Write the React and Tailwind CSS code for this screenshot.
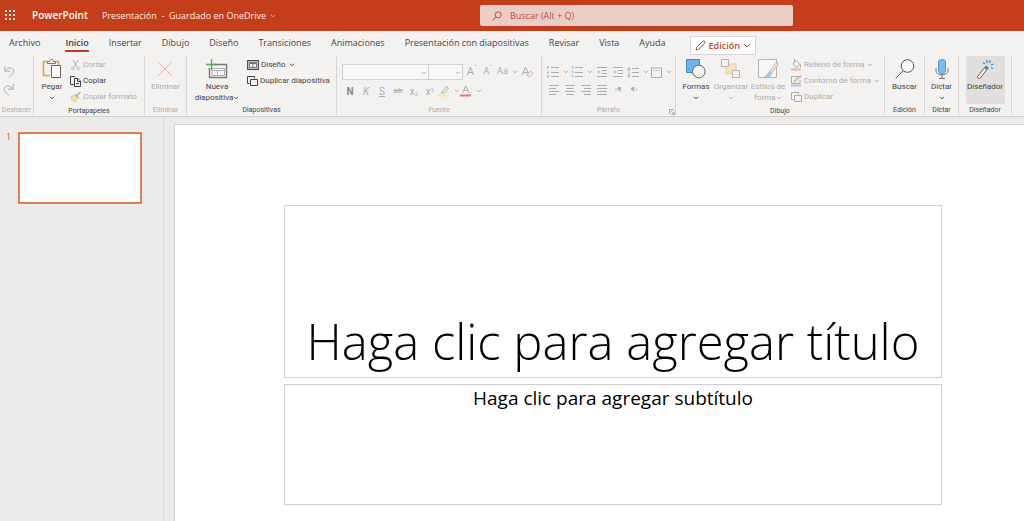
import React, { useState } from 'react';

const tabs = [
  'Archivo',
  'Inicio',
  'Insertar',
  'Dibujo',
  'Diseño',
  'Transiciones',
  'Animaciones',
  'Presentación con diapositivas',
  'Revisar',
  'Vista',
  'Ayuda',
];

const Svg = ({ w, h, className = '', children }) => (
  <svg
    width={w}
    height={h}
    viewBox={`0 0 ${w} ${h}`}
    fill="none"
    stroke="currentColor"
    strokeWidth="1"
    className={`shrink-0 ${className}`}
    aria-hidden="true"
  >
    {children}
  </svg>
);

const Chevron = ({ className = '' }) => (
  <Svg w={6} h={4} className={className}>
    <path d="M1 .8 3 2.8 5 .8" />
  </Svg>
);

const UndoIcon = () => (
  <Svg w={12} h={12}>
    <path d="M1.800 0v5.200H7M2 5C4 2.400 6.500 1.200 8.600 2.200c2.600 1.200 2.600 4 1 5.600L6 11.500" />
  </Svg>
);

const RedoIcon = () => (
  <Svg w={12} h={12}>
    <path d="M10.200 0v5.200H5M10 5C8 2.400 5.500 1.200 3.400 2.200c-2.600 1.200-2.600 4-1 5.600L6 11.500" />
  </Svg>
);

const PasteIcon = () => (
  <Svg w={20} h={21}>
    <path d="M8 17.500H1.500v-14h4M13 3.500h3.500v4" stroke="#e0a63c" strokeWidth="1.600" />
    <path d="M5.500 5.500v-2h2c0-3 4-3 4 0h2v2z" fill="#f7f6f5" stroke="#777" />
    <path d="M9.500 7.500h9v12h-9z" fill="#fff" stroke="#666" />
  </Svg>
);

const CutIcon = () => (
  <Svg w={11} h={12}>
    <path d="M3 1l4.500 7.500M8 1 3.500 8.500" />
    <circle cx="2.800" cy="9.600" r="1.300" stroke="#9cc3e4" />
    <circle cx="8.200" cy="9.600" r="1.300" stroke="#9cc3e4" />
  </Svg>
);

const CopyIcon = () => (
  <Svg w={11} h={12}>
    <path d="M4 9.500H.5v-8h4l1 1" />
    <path d="M4.500 3.500h3.500l2.500 2.500v5.500h-6zM7.500 3.500v3h3M6 8.500h3" />
  </Svg>
);

const BrushIcon = () => (
  <Svg w={11} h={12}>
    <path d="M10.300 1.200 7 4.500M5 3.500l3.500 3.500" strokeWidth="1.600" />
    <path d="M4.500 4 1 6c.6 2.600 2 4 4 5l3-3.500z" fill="#f8dfb8" stroke="#e9c48c" />
  </Svg>
);

const DeleteIcon = () => (
  <Svg w={16} h={16}>
    <path d="M1 1l14 14M15 1 1 15" stroke="#eeb0a8" />
  </Svg>
);

const NewSlideIcon = () => (
  <Svg w={22} h={20}>
    <path d="M8 5.500h12.500v13h-17V9" stroke="#777" strokeWidth="1.400" />
    <path d="M6 16.500V9.500h12.500v7zM6 11.500h12.500M11.500 11.500v5" stroke="#999" strokeWidth=".7" />
    <path d="M5.500 0v11M0 5.500h11" stroke="#4da85c" strokeWidth="1.400" />
  </Svg>
);

const LayoutIcon = () => (
  <Svg w={12} h={10}>
    <path d="M.7.700h10.600v8.600H.7z" strokeWidth="1.200" />
    <path d="M2.500 3.500v4h7v-4zM2 2.500h8M6 3.500v4" strokeWidth=".7" />
  </Svg>
);

const DuplicateIcon = () => (
  <Svg w={11} h={11}>
    <path d="M2.500 7.500h-2v-7h7v2" />
    <path d="M3.500 3.500h7v6h-7z" />
  </Svg>
);

const HighlighterIcon = () => (
  <Svg w={12} h={12}>
    <path d="M4 7 8.500 1.500l2 1.500L6.500 8H4zM4 7l-1.500 1.500" />
    <path d="M0 10.500h11" stroke="#f4f08a" strokeWidth="2" />
  </Svg>
);

const FontColorIcon = () => (
  <Svg w={12} h={12}>
    <path d="M2.500 8 5.700.800 9 8M3.700 5.500h4" />
    <path d="M0 10.500h11" stroke="#ee7470" strokeWidth="2" />
  </Svg>
);

const ClearFormatIcon = () => (
  <Svg w={13} h={12}>
    <path d="M1 9 4.500 1 7.500 8M2.200 6.500h4" />
    <path d="M6 8.500 9.500 5 12 7.500 9 10.500H7.500z" stroke="#c7a3cd" />
  </Svg>
);

const BulletsIcon = () => (
  <Svg w={12} h={12}>
    <path d="M4 1.500h8M4 6.500h8M4 10.500h8" />
    <path d="M0 1.500h2M0 6.500h2M0 10.500h2" stroke="#9cc3e4" strokeWidth="2" />
  </Svg>
);

const NumberingIcon = () => (
  <Svg w={12} h={12}>
    <path d="M4 1.500h8M4 6.500h8M4 10.500h8" />
    <path d="M1.500 0v3M.5 5.500h1.500v2M.5 9.500h1.500v2" stroke="#9cc3e4" />
  </Svg>
);

const IndentIcon = ({ increase }) => (
  <Svg w={10} h={10}>
    <path d="M0 .5h10M5 3.500h5M5 6.500h5M0 9.500h10" />
    <path d={increase ? 'M0 5h3M1.800 3.200 3.500 5 1.800 6.800' : 'M4 5H1M2.200 3.200.500 5l1.700 1.800'} stroke="#aac4da" />
  </Svg>
);

const LineSpacingIcon = () => (
  <Svg w={12} h={11}>
    <path d="M5 1.500h7M5 5.500h7M5 9.500h7" />
    <path d="M2 .5v10M.5 2.500 2 .8l1.500 1.700M.5 8.500 2 10.200l1.500-1.700" stroke="#8fb9dc" />
  </Svg>
);

const TextAlignIcon = () => (
  <Svg w={11} h={11}>
    <path d="M.5 1v9.500h10V1M0 1h11" />
    <path d="M2.500 3.500h1.500M5 3.500h1M7.500 3.500h1" />
  </Svg>
);

const ShapesIcon = () => (
  <Svg w={20} h={20}>
    <path d="M.5.500h13v13H.5z" fill="#6db3ea" stroke="#3f8ecb" />
    <circle cx="12.800" cy="12.500" r="6.300" fill="#f6f5f4" stroke="#666" />
  </Svg>
);

const ArrangeIcon = () => (
  <Svg w={20} h={20}>
    <path d="M5 5h10v10H5z" fill="#f9e2bb" stroke="#efcf98" />
    <path d="M.5.500h7v7h-7zM11.500 11.500h7v7h-7z" fill="#f6f4f2" stroke="#b5b3b1" />
  </Svg>
);

const StylesIcon = () => (
  <Svg w={20} h={20}>
    <path d="M.5.500h18v18H.5z" fill="#f8f7f6" stroke="#b5b3b1" />
    <path d="M19 3 12 12.500l1.500 1.500L19.500 6z" fill="#f3f2f1" stroke="#b5b3b1" />
    <path d="M12 12.500c-2 .5-2.500 4-5.500 5.500 4 .8 7-1 7-4z" fill="#a5cdee" stroke="#8dbde6" />
  </Svg>
);

const FillIcon = () => (
  <Svg w={11} h={12}>
    <path d="M4.500 1 9 5.500 5.500 8.500 2 5zM3.500 0v4M9.500 5.500v3" />
    <path d="M0 10.500h10" stroke="#f3b195" strokeWidth="2" />
  </Svg>
);

const OutlineIcon = () => (
  <Svg w={11} h={12}>
    <path d="M8 1.500H.5v7H9V5M3 6.500l1-2 5.500-4 .5 1L5 6z" />
    <path d="M0 10.500h10" stroke="#a9c8e8" strokeWidth="2" />
  </Svg>
);

const MagnifierIcon = () => (
  <Svg w={20} h={20}>
    <circle cx="12.500" cy="7" r="6.300" stroke="#555" fill="#faf9f8" />
    <path d="M8 11.800.8 19.300" stroke="#555" />
  </Svg>
);

const MicIcon = () => (
  <Svg w={14} h={20}>
    <path d="M3.500 2.500c0-2.500 7-2.500 7 0v10c0 2.500-7 2.500-7 0z" fill="#7cbcee" stroke="#4b93cd" />
    <path d="M1 9v3c0 5 12 5 12 0V9M7 16v3M4 19.500h6" stroke="#777" />
  </Svg>
);

const WandIcon = () => (
  <Svg w={18} h={20}>
    <path d="M1.500 17.500 10 7l2.200 1.800L4 19.300c-1 .8-3.500-.6-2.500-1.800z" stroke="#666" fill="#f3f2f1" />
    <path d="M8.500 9 10 7l2.200 1.800L10.800 10.700z" fill="#3d8fd1" stroke="#3d7fb5" />
    <path d="M11 1v3M7 3.500l2 1.500M14.500 1.500 13.300 4M17.500 5 15 6M17 9.500l-2-.8" stroke="#3d8fd1" strokeWidth="1.300" />
  </Svg>
);

const LauncherIcon = () => (
  <Svg w={6} h={6}>
    <path d="M.5 5V.5H5M2 2l3 3M5.500 2.500v3h-3" />
  </Svg>
);

const SmallIconButton = ({ label, children, className = 'w-4' }) => (
  <button type="button" aria-label={label} className={`flex h-4 shrink-0 items-center justify-center gap-1 ${className}`}>
    {children}
  </button>
);

const Group = ({ label, className, muted, launcher, children }) => (
  <section
    className={`relative flex shrink-0 flex-col border-r border-[#d8d6d4] ${className} ${
      muted ? 'text-[#adabaa]' : 'text-[#444]'
    }`}
  >
    <div className="flex h-[50px] items-start justify-center">{children}</div>
    <h2 className="pt-px text-center text-[7px] leading-[10px]">{label}</h2>
    {launcher && (
      <button type="button" aria-label="Opciones de párrafo" className="absolute right-0 bottom-0">
        <LauncherIcon />
      </button>
    )}
  </section>
);

const BigButton = ({ icon, lines, arrow, className = '' }) => (
  <button type="button" className={`flex shrink-0 flex-col items-center pt-[2px] text-[8px] leading-[11px] whitespace-nowrap ${className}`}>
    <span className="mb-[2px] flex h-[21px] items-center">{icon}</span>
    {lines.map((line, i) => (
      <span key={line} className="flex items-center">
        {line}
        {arrow && lines.length > 1 && i === lines.length - 1 && <Chevron />}
      </span>
    ))}
    {arrow && lines.length === 1 && <Chevron className="mt-1" />}
  </button>
);

const RowButton = ({ icon, label, muted, arrow }) => (
  <button
    type="button"
    className={`flex h-4 items-center gap-[2px] text-[8px] whitespace-nowrap ${muted ? 'text-[#adabaa]' : 'text-[#444]'}`}
  >
    {icon}
    <span>{label}</span>
    {arrow && <Chevron className="ml-px" />}
  </button>
);

const FontSelect = ({ label, className }) => (
  <span className={`relative ${className}`}>
    <select aria-label={label} className="block h-4 w-full appearance-none border border-[#d2d0ce] bg-[#f9f8f9]" defaultValue="">
      <option value=""></option>
    </select>
    <Chevron className="pointer-events-none absolute top-[7px] right-[2px]" />
  </span>
);

const AlignIcon = ({ d }) => (
  <Svg w={10} h={10}>
    <path d={d} />
  </Svg>
);

const Ribbon = () => (
  <div className="flex h-[61px] overflow-hidden border-b border-[#d2d0ce] bg-[#f3f2f1] pb-px font-[Roboto,sans-serif]">
    <Group label="Deshacer" className="w-[34px]" muted>
      <div className="flex w-full flex-col gap-[2px] pt-2 pl-px">
        <SmallIconButton label="Deshacer"><UndoIcon /></SmallIconButton>
        <SmallIconButton label="Rehacer"><RedoIcon /></SmallIconButton>
      </div>
    </Group>

    <Group label="Portapapeles" className="w-[111px]">
      <BigButton icon={<PasteIcon />} lines={['Pegar']} arrow className="w-9" />
      <div className="flex w-[74px] flex-col pt-px">
        <RowButton icon={<CutIcon />} label="Cortar" muted />
        <RowButton icon={<CopyIcon />} label="Copiar" />
        <RowButton icon={<BrushIcon />} label="Copiar formato" muted />
      </div>
    </Group>

    <Group label="Eliminar" className="w-[42px]" muted>
      <BigButton icon={<DeleteIcon />} lines={['Eliminar']} />
    </Group>

    <Group label="Diapositivas" className="w-[150px]">
      <BigButton icon={<NewSlideIcon />} lines={['Nueva', 'diapositiva']} arrow className="w-[60px]" />
      <div className="flex w-[90px] flex-col pt-px">
        <RowButton icon={<LayoutIcon />} label="Diseño" arrow />
        <RowButton icon={<DuplicateIcon />} label="Duplicar diapositiva" />
      </div>
    </Group>

    <Group label="Fuente" className="w-[205px]" muted>
      <div className="flex w-full flex-col gap-[3px] pt-2 pl-[5px]">
        <div className="flex items-center">
          <FontSelect label="Fuente" className="w-[87px]" />
          <FontSelect label="Tamaño de fuente" className="-ml-px w-[35px]" />
          <SmallIconButton label="Aumentar tamaño" className="ml-px w-4 text-[11px]">
            <span>A<sup className="text-[7px]">ˆ</sup></span>
          </SmallIconButton>
          <SmallIconButton label="Reducir tamaño" className="w-4 text-[9px]">
            <span>A<sup className="text-[7px]">ˇ</sup></span>
          </SmallIconButton>
          <SmallIconButton label="Mayúsculas y minúsculas" className="w-[23px] text-[9px]">
            Aa<Chevron />
          </SmallIconButton>
          <SmallIconButton label="Borrar formato"><ClearFormatIcon /></SmallIconButton>
        </div>
        <div className="flex items-center text-[10px]">
          <SmallIconButton label="Negrita"><b className="text-[#8a8886]">N</b></SmallIconButton>
          <SmallIconButton label="Cursiva"><i>K</i></SmallIconButton>
          <SmallIconButton label="Subrayado"><u>S</u></SmallIconButton>
          <SmallIconButton label="Tachado"><s className="text-[8px]">ab</s></SmallIconButton>
          <SmallIconButton label="Subíndice"><span>x<sub className="text-[6px] text-[#8fb9dc]">2</sub></span></SmallIconButton>
          <SmallIconButton label="Superíndice"><span>x<sup className="text-[6px] text-[#8fb9dc]">2</sup></span></SmallIconButton>
          <SmallIconButton label="Resaltado" className="w-[22px]"><HighlighterIcon /><Chevron /></SmallIconButton>
          <SmallIconButton label="Color de fuente" className="w-[22px]"><FontColorIcon /><Chevron /></SmallIconButton>
        </div>
      </div>
    </Group>

    <Group label="Párrafo" className="w-[134px]" muted launcher>
      <div className="flex w-full flex-col gap-[2px] pt-2 pl-1">
        <div className="flex items-center">
          <SmallIconButton label="Viñetas" className="w-6"><BulletsIcon /><Chevron /></SmallIconButton>
          <SmallIconButton label="Numeración" className="w-6"><NumberingIcon /><Chevron /></SmallIconButton>
          <SmallIconButton label="Disminuir sangría"><IndentIcon /></SmallIconButton>
          <SmallIconButton label="Aumentar sangría"><IndentIcon increase /></SmallIconButton>
          <SmallIconButton label="Interlineado" className="w-6"><LineSpacingIcon /><Chevron /></SmallIconButton>
          <SmallIconButton label="Alinear texto" className="w-[22px]"><TextAlignIcon /><Chevron /></SmallIconButton>
        </div>
        <div className="flex items-center text-[8px]">
          <SmallIconButton label="Alinear a la izquierda"><AlignIcon d="M0 .5h10M0 3.500h7M0 6.500h10M0 9.500h7" /></SmallIconButton>
          <SmallIconButton label="Centrar"><AlignIcon d="M0 .5h10M1.500 3.500h7M0 6.500h10M1.500 9.500h7" /></SmallIconButton>
          <SmallIconButton label="Alinear a la derecha"><AlignIcon d="M0 .5h10M3 3.500h7M0 6.500h10M3 9.500h7" /></SmallIconButton>
          <SmallIconButton label="Justificar"><AlignIcon d="M0 .5h10M0 3.500h10M0 6.500h10M0 9.500h10" /></SmallIconButton>
          <SmallIconButton label="De izquierda a derecha">›¶</SmallIconButton>
          <SmallIconButton label="De derecha a izquierda">¶‹</SmallIconButton>
        </div>
      </div>
    </Group>

    <Group label="Dibujo" className="w-[209px]">
      <BigButton icon={<ShapesIcon />} lines={['Formas']} arrow className="w-[34px]" />
      <BigButton icon={<ArrangeIcon />} lines={['Organizar']} arrow className="w-9 text-[#adabaa]" />
      <BigButton icon={<StylesIcon />} lines={['Estilos de', 'forma']} arrow className="w-[38px] text-[#adabaa]" />
      <div className="flex w-[94px] flex-col pt-px pl-1">
        <RowButton icon={<FillIcon />} label="Relleno de forma" muted arrow />
        <RowButton icon={<OutlineIcon />} label="Contorno de forma" muted arrow />
        <RowButton icon={<DuplicateIcon />} label="Duplicar" muted />
      </div>
    </Group>

    <Group label="Edición" className="w-10">
      <BigButton icon={<MagnifierIcon />} lines={['Buscar']} />
    </Group>

    <Group label="Dictar" className="w-[34px]">
      <BigButton icon={<MicIcon />} lines={['Dictar']} arrow />
    </Group>

    <Group label="Diseñador" className="w-[53px]">
      <BigButton icon={<WandIcon />} lines={['Diseñador']} className="h-12 w-[39px] bg-[#e1dfdd]" />
    </Group>
  </div>
);

const Header = () => (
  <header className="flex h-[31px] items-center bg-[#c43e1c] text-white">
    <button type="button" aria-label="Iniciador de aplicaciones" className="flex w-8 pl-[5px]">
      <Svg w={11} h={11}>
        {[0, 4, 8].map((y) =>
          [0, 4, 8].map((x) => <rect key={`${x}-${y}`} x={x} y={y} width="2" height="2" fill="#f9e3dc" stroke="none" />)
        )}
      </Svg>
    </button>
    <span className="w-[70px] text-[10px] font-semibold">PowerPoint</span>
    <button type="button" className="flex w-[378px] items-center gap-1 text-[9px] text-[#fbeae5]">
      <span>Presentación&nbsp; -&nbsp; Guardado en OneDrive</span>
      <Chevron className="text-[#eba894]" />
    </button>
    <label className="flex h-[21px] max-w-[313px] flex-1 items-center gap-2 rounded-xs bg-[#ebcdc5] pl-3 text-[#b5523a]">
      <Svg w={10} h={10}>
        <circle cx="6.200" cy="3.800" r="3" />
        <path d="M4 6 .6 9.400" />
      </Svg>
      <input
        type="search"
        aria-label="Buscar"
        placeholder="Buscar (Alt + Q)"
        className="w-full bg-transparent text-[9px] outline-none placeholder:text-[#b5523a]"
      />
    </label>
  </header>
);

const App = () => {
  const [activeTab, setActiveTab] = useState('Inicio');

  return (
    <div className="flex min-h-screen flex-col overflow-hidden bg-[#edebe9] font-['Open_Sans',sans-serif] text-[#444]">
      <Header />
      <nav className="flex h-[25px] items-center gap-5 bg-[#f3f2f1] pl-[9px] text-[9px] whitespace-nowrap">
        {tabs.map((tab) => (
          <button
            key={tab}
            type="button"
            onClick={() => setActiveTab(tab)}
            className={`h-[21px] self-start border-b-2 pt-1 first:mr-[5px] ${
              activeTab === tab ? 'border-[#c43e1c] font-semibold' : 'border-transparent'
            }`}
          >
            {tab}
          </button>
        ))}
        <button
          type="button"
          className="mt-1 ml-1 flex h-[19px] items-center gap-[3px] border border-[#d8d6d4] bg-white px-1 font-semibold text-[#b7472a]"
        >
          <Svg w={11} h={11}>
            <path d="M1 10 1.700 7.300 8 1c1-.8 2.700.8 1.900 1.900L3.600 9.300z" />
          </Svg>
          Edición
          <Svg w={8} h={5}>
            <path d="M1 1 4 4 7 1" />
          </Svg>
        </button>
      </nav>

      <Ribbon />

      <div className="flex flex-1">
        <aside className="flex w-[164px] shrink-0 items-start border-r border-[#dddbd9] pt-[15px] pl-[6px]">
          <span className="w-3 text-[9px] leading-[10px] text-[#d0583a]">1</span>
          <button type="button" aria-label="Diapositiva 1" className="h-[72px] w-[124px] border-2 border-[#e07b60] bg-white" />
        </aside>
        <main className="flex flex-1 flex-col pt-[7px] pl-[10px]">
          <div className="flex flex-1 flex-col gap-[6px] border-t border-l border-[#d4d2d0] bg-white pt-20 pr-[82px] pb-4 pl-[109px] text-black">
            <h1 className="flex h-[173px] items-end justify-center border border-[#cfcfcf] pb-1 text-[49px] leading-[64px] font-light whitespace-nowrap">
              Haga clic para agregar título
            </h1>
            <p className="h-[121px] border border-[#cfcfcf] text-center text-[19px] leading-[26px]">
              Haga clic para agregar subtítulo
            </p>
          </div>
        </main>
      </div>
    </div>
  );
};

export default App;
